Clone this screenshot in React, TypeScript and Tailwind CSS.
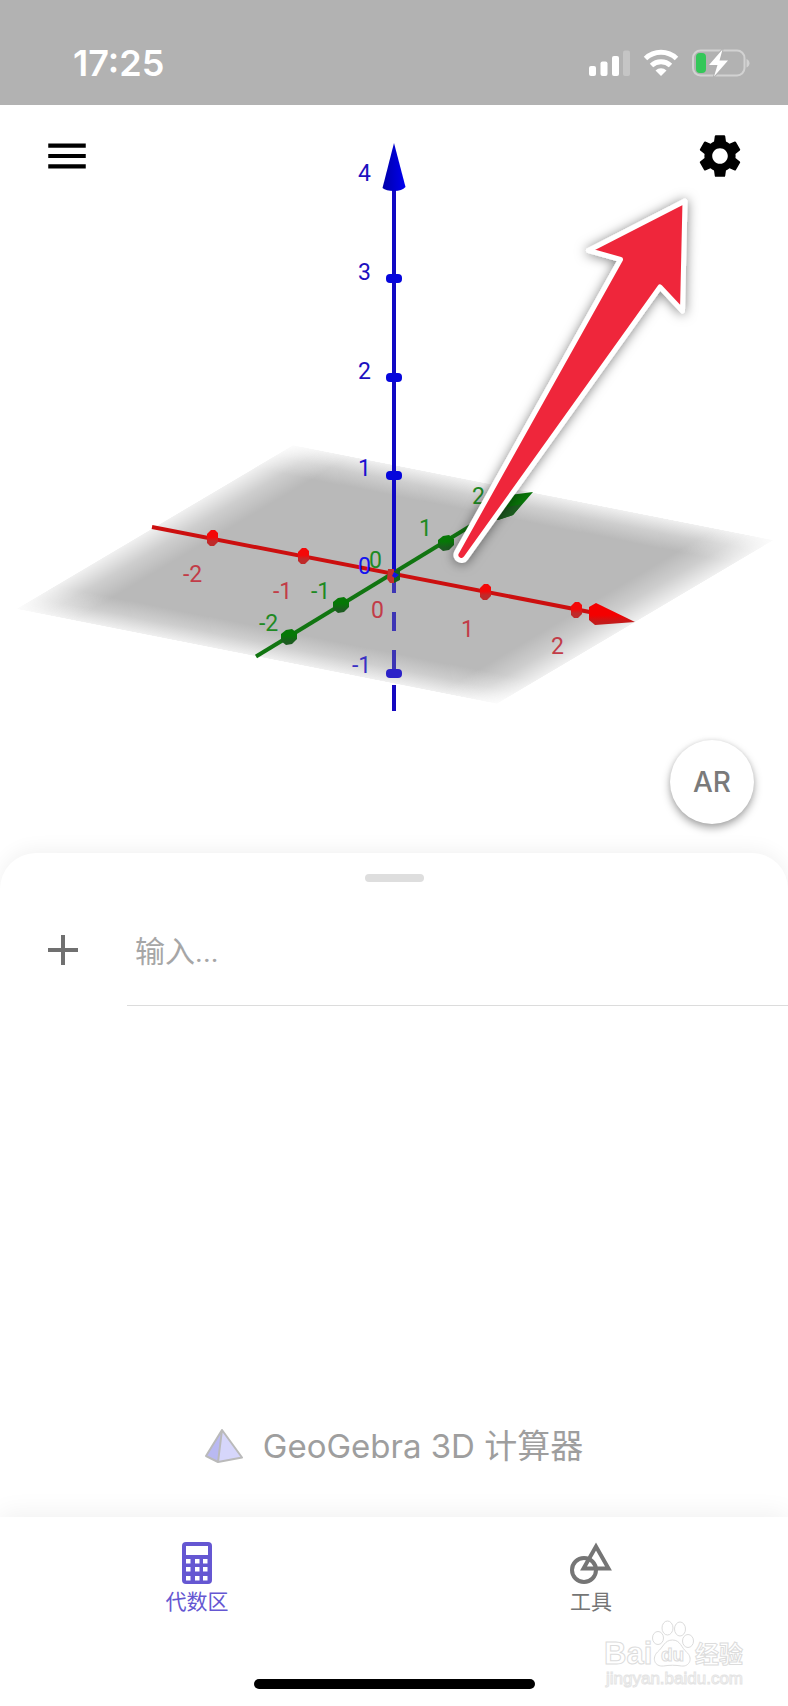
import { MdMenu, MdSettings } from 'react-icons/md';

const zTicks = [278, 377, 475];
const xTicks = [
  { x: 212, y: 538 },
  { x: 303, y: 556 },
  { x: 485, y: 592 },
  { x: 576, y: 610 },
];
const yTicks = [
  { x: 289, y: 637 },
  { x: 341, y: 605 },
  { x: 446, y: 543 },
];

const labels = [
  { text: '4', x: 358, y: 181, color: '#1d10bf' },
  { text: '3', x: 358, y: 280, color: '#1d10bf' },
  { text: '2', x: 358, y: 379, color: '#1d10bf' },
  { text: '1', x: 358, y: 476, color: '#1d10d0' },
  { text: '0', x: 358, y: 574, color: '#1414f0' },
  { text: '-1', x: 352, y: 673, color: '#3a30c4' },
  { text: '-2', x: 183, y: 582, color: '#c23c48' },
  { text: '-1', x: 273, y: 599, color: '#c23c48' },
  { text: '0', x: 371, y: 618, color: '#c23c48' },
  { text: '1', x: 461, y: 637, color: '#c23c48' },
  { text: '2', x: 551, y: 654, color: '#c23c48' },
  { text: '-2', x: 259, y: 631, color: '#1f8a24' },
  { text: '-1', x: 311, y: 599, color: '#1f8a24' },
  { text: '0', x: 369, y: 568, color: '#1f8a24' },
  { text: '1', x: 419, y: 536, color: '#1f8a24' },
  { text: '2', x: 472, y: 504, color: '#1f8a24' },
];

function StatusBar() {
  return (
    <header className="flex h-[105px] items-center justify-between bg-[#b2b2b2] pt-5 pr-[38px] pl-[73px] text-white">
      <time className="font-['Inter',sans-serif] text-[36px] leading-none font-semibold">17:25</time>
      <svg width="162" height="30" viewBox="587 47 162 30" aria-hidden="true">
        <g fill="#fff">
          <rect x="588" y="65" width="7" height="10" rx="2" />
          <rect x="599.5" y="60.5" width="7" height="14.5" rx="2" />
          <rect x="611" y="55" width="7" height="20" rx="2" />
          <rect x="622" y="49.5" width="7" height="25.5" rx="2" opacity="0.25" />
        </g>
        <g fill="none" stroke="#fff" strokeWidth="5">
          <path d="M644.5 57.5a22.5 22.5 0 0 1 31 0" />
          <path d="M650.5 64.5a14 14 0 0 1 19 0" />
        </g>
        <path d="M660 75l-5.5-5.5a8 8 0 0 1 11 0z" fill="#fff" />
        <rect x="692" y="49.5" width="51.5" height="25" rx="7.5" fill="none" stroke="#d2d2d2" strokeWidth="2" />
        <path d="M745.5 58c4 1.500 4 7 0 8.500z" fill="#d2d2d2" />
        <rect x="695" y="52" width="10" height="20" rx="4" fill="#34c759" />
        <path
          d="M721.500 48.500l-13.500 15.500h8.500l-3.500 11.500 14-16h-8.500z"
          fill="#fff"
          stroke="#b2b2b2"
          strokeWidth="2"
          strokeLinejoin="round"
          paintOrder="stroke"
        />
      </svg>
    </header>
  );
}

function Scene() {
  return (
    <svg
      className="absolute inset-0 h-full w-full font-['Roboto',sans-serif] text-[23px]"
      viewBox="0 105 788 748"
      role="img"
      aria-label="3D"
    >
      <defs>
        <linearGradient id="fade-x">
          <stop offset="0" stopColor="#fff" stopOpacity="0.2" />
          <stop offset="0.06" stopColor="#fff" stopOpacity="0.7" />
          <stop offset="0.12" stopColor="#fff" />
          <stop offset="0.88" stopColor="#fff" />
          <stop offset="0.94" stopColor="#fff" stopOpacity="0.7" />
          <stop offset="1" stopColor="#fff" stopOpacity="0.2" />
        </linearGradient>
        <linearGradient id="fade-y" x1="0" y1="0" x2="0" y2="1">
          <stop offset="0" stopColor="#b9b9b9" stopOpacity="0.2" />
          <stop offset="0.07" stopColor="#b9b9b9" stopOpacity="0.7" />
          <stop offset="0.14" stopColor="#b9b9b9" />
          <stop offset="0.86" stopColor="#b9b9b9" />
          <stop offset="0.93" stopColor="#b9b9b9" stopOpacity="0.7" />
          <stop offset="1" stopColor="#b9b9b9" stopOpacity="0.2" />
        </linearGradient>
        <mask id="plane-mask" maskUnits="userSpaceOnUse" x="0" y="0" width="100" height="100" style={{ maskType: 'alpha' }}>
          <rect width="100" height="100" fill="url(#fade-x)" />
        </mask>
        <linearGradient id="z-cone">
          <stop offset="0" stopColor="#0000a8" />
          <stop offset="1" stopColor="#0000f0" />
        </linearGradient>
        <linearGradient id="x-cone" x1="0" y1="0" x2="0" y2="1">
          <stop offset="0.55" stopColor="#f40000" />
          <stop offset="0.85" stopColor="#c41a1a" />
        </linearGradient>
        <linearGradient id="x-tick" x1="0" y1="0" x2="0" y2="1">
          <stop offset="0.45" stopColor="#f40808" />
          <stop offset="0.7" stopColor="#bf2a2a" />
        </linearGradient>
        <linearGradient id="y-tick" x1="0" y1="0" x2="0" y2="1">
          <stop offset="0.4" stopColor="#067806" />
          <stop offset="0.8" stopColor="#1c5c20" />
        </linearGradient>
        <filter id="arrow-shadow" x="-20%" y="-20%" width="140%" height="140%">
          <feDropShadow dx="0" dy="1" stdDeviation="6" floodColor="#000" floodOpacity="0.5" />
        </filter>
      </defs>

      {/* xy plane */}
      <g transform="matrix(4.81 0.95 2.77 -1.64 16 609)">
        <rect width="100" height="100" fill="url(#fade-y)" mask="url(#plane-mask)" />
      </g>

      {/* part of the z axis seen through the plane */}
      <g stroke="#3d35b5" strokeWidth="4">
        <path d="M394 576V593M394 612V631M394 650V670" />
        <path d="M394 685V711" stroke="#1508c0" />
      </g>
      <rect x="386" y="669" width="16" height="9" rx="4" fill="#2c22c8" />

      {/* x axis */}
      <path d="M152 527L600 614" stroke="#cc0f0f" strokeWidth="4" />
      {xTicks.map((t) => (
        <path
          key={t.x}
          d={`M${t.x - 5} ${t.y - 4}l4 -4h4l3 3v9l-4 4h-4l-3 -3z`}
          fill="url(#x-tick)"
        />
      ))}
      <path d="M589 607l7-4 39 19-40 3-6-5z" fill="url(#x-cone)" />

      {/* y axis */}
      <path d="M256 656.500L500 508" stroke="#117511" strokeWidth="4" />
      {yTicks.map((t) => (
        <path
          key={t.x}
          d={`M${t.x - 8} ${t.y - 3}l5 -4 6 -1 5 4v6l-5 5 -6 1 -5 -4z`}
          fill="url(#y-tick)"
        />
      ))}
      <path d="M502 496L533 492L513 515L498 520L490 516Z" fill="#087408" />
      <path d="M503 508L522 504L513 515L498 520L490 516Z" fill="#1c5c20" />

      {/* z axis */}
      <path d="M394 188V574" stroke="#1008c4" strokeWidth="4" />
      {zTicks.map((y) => (
        <rect key={y} x="386" y={y - 4} width="16" height="9" rx="4" fill="#0606dc" />
      ))}
      <path d="M394 143L405.500 187Q402 191 394 191Q386 191 382.500 188Z" fill="url(#z-cone)" />

      {/* origin */}
      <path d="M388 569h6v14h-4l-3-4z" fill="#c4302e" />
      <path d="M394 571l6-2v11l-6 3z" fill="#146017" />
      <path d="M394 572l5 3-4 3-3-2z" fill="#1414e0" />

      {labels.map((l) => (
        <text key={`${l.x}-${l.y}`} x={l.x} y={l.y} fill={l.color}>
          {l.text}
        </text>
      ))}

      <path
        d="M685 201L588.500 250.500L620.500 259.500L456.500 552.500A5.500 5.500 0 0 0 466 558L660 287L682.500 311Z"
        fill="#ef283a"
        stroke="#fff"
        strokeWidth="5"
        strokeLinejoin="round"
        filter="url(#arrow-shadow)"
      />
    </svg>
  );
}

function Pyramid() {
  return (
    <svg width="38" height="34" viewBox="0 0 38 34" aria-hidden="true">
      <path d="M17 1L1 27L13 33Z" fill="#b9b9f2" />
      <path d="M17 1L13 33L37 28.500Z" fill="#d6d6fb" />
      <path d="M17 1L1 27L13 33L37 28.500ZM17 1L13 33" fill="none" stroke="#bababa" strokeWidth="2" strokeLinejoin="round" />
    </svg>
  );
}

function CalculatorIcon() {
  return (
    <svg width="42" height="42" viewBox="0 0 42 42" aria-hidden="true">
      <rect x="6" width="30" height="42" rx="4" fill="currentColor" />
      <rect x="10" y="4" width="22" height="9" fill="#fff" />
      {[17, 25, 34].map((y) =>
        [10, 19, 27].map((x) => <rect key={`${x}-${y}`} x={x} y={y} width="4.500" height="4.500" fill="#fff" />),
      )}
    </svg>
  );
}

function ToolsIcon() {
  return (
    <svg width="42" height="42" viewBox="0 0 42 42" fill="none" stroke="currentColor" aria-hidden="true">
      <circle cx="14" cy="28" r="12" strokeWidth="4" />
      <path d="M26 4.500L13.500 26.500H38.500Z" strokeWidth="4" />
    </svg>
  );
}

function Watermark() {
  return (
    <svg
      className="pointer-events-none absolute right-10 bottom-4 font-['Liberation_Sans','Noto_Sans_CJK_SC',sans-serif] font-bold"
      width="144"
      height="70"
      viewBox="604 1620 144 70"
      fill="#fff"
      stroke="#dcdcdc"
      strokeWidth="1"
    >
      <text x="604" y="1664" fontSize="31">Bai</text>
      <ellipse cx="658" cy="1638" rx="5.500" ry="6.500" />
      <ellipse cx="667.500" cy="1628" rx="5.500" ry="7" />
      <ellipse cx="680" cy="1629" rx="5.500" ry="7" />
      <ellipse cx="688" cy="1641" rx="5.500" ry="6.500" />
      <path d="M672.500 1640c8 0 9 8 14 12 7 6 3 15-5 14-6-1-12-1-18 0-9 1-12-8-6-14 6-5 7-12 15-12z" />
      <text x="661" y="1661" fontSize="19">du</text>
      <text x="695" y="1663" fontSize="24">经验</text>
      <text x="606" y="1684" fontSize="17" fontWeight="400" stroke="#e4e4e4">jingyan.baidu.com</text>
    </svg>
  );
}

export default function App() {
  return (
    <div className="flex min-h-screen flex-col bg-white font-['Roboto','Noto_Sans_CJK_SC',sans-serif]">
      <StatusBar />

      <main className="flex flex-1 flex-col">
        <section className="relative flex h-[748px] flex-col justify-between">
          <Scene />
          <div className="relative flex items-center justify-between px-[42px] pt-[25px] text-black">
            <button type="button" aria-label="菜单" className="text-[50px]">
              <MdMenu />
            </button>
            <button type="button" aria-label="设置" className="text-[52px]">
              <MdSettings />
            </button>
          </div>
          <button
            type="button"
            className="relative mr-[34px] mb-[29px] size-[84px] self-end rounded-full bg-white font-['Inter',sans-serif] text-[28px] font-medium text-[#7a7a7a] shadow-[0_4px_8px_rgba(0,0,0,0.35),0_0_4px_rgba(0,0,0,0.08)]"
          >
            AR
          </button>
        </section>

        <section className="relative flex flex-1 flex-col rounded-t-[36px] bg-white shadow-[0_-3px_20px_rgba(0,0,0,0.06)]">
          <div className="mx-auto mt-[21px] h-2 w-[59px] rounded-full bg-[#dedede]" />
          <div className="flex h-[124px] items-stretch">
            <button type="button" aria-label="添加" className="w-[127px] pt-3 pl-12 text-[#707070]">
              <svg width="30" height="30" viewBox="0 0 30 30" stroke="currentColor" strokeWidth="4">
                <path d="M15 0V30M0 15H30" />
              </svg>
            </button>
            <input
              type="text"
              aria-label="输入"
              placeholder="输入..."
              className="min-w-0 flex-1 border-b border-[#dcdcdc] pt-6 pb-2 pl-2 text-[30px] outline-none placeholder:text-[#a6a6a6]"
            />
          </div>
          <div className="mt-auto flex items-center justify-center gap-5 pb-[46px] font-['Inter','Noto_Sans_CJK_SC',sans-serif] text-[33px] text-[#9e9e9e]">
            <Pyramid />
            <span>GeoGebra 3D 计算器</span>
          </div>
        </section>
      </main>

      <nav className="relative flex h-[189px] flex-col justify-between bg-white pt-[25px] pb-[17px] text-[21px] shadow-[0_-4px_24px_rgba(0,0,0,0.06)]">
        <div className="grid grid-cols-2">
          <button type="button" className="flex flex-col items-center gap-1 text-[#6557d2]">
            <CalculatorIcon />
            <span className="leading-7">代数区</span>
          </button>
          <button type="button" className="flex flex-col items-center gap-1 text-[#757575]">
            <ToolsIcon />
            <span className="leading-7">工具</span>
          </button>
        </div>
        <div className="mx-auto h-[10px] w-[281px] rounded-full bg-black" />
        <Watermark />
      </nav>
    </div>
  );
}
